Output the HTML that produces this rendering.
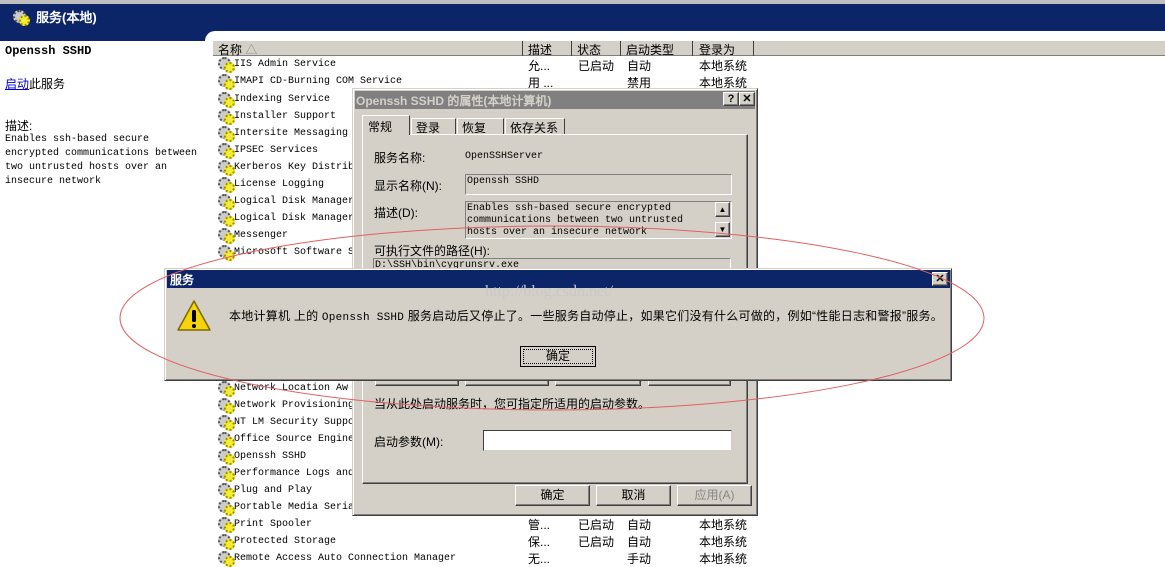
<!DOCTYPE html>
<html><head><meta charset="utf-8"><style>
*{margin:0;padding:0;box-sizing:border-box}
body{width:1165px;height:566px;overflow:hidden;background:#fff;position:relative;font-family:"Liberation Mono","WenQuanYi Zen Hei",monospace;font-size:10px;color:#000}
.a{position:absolute;white-space:nowrap}
.cn{font-family:"Liberation Sans","WenQuanYi Zen Hei",sans-serif;font-size:12px}
.row{position:absolute;left:217px;height:17px;line-height:17px;font-size:10px}
.ic{display:inline-block;width:16px;height:14px;vertical-align:middle;margin-right:1px;position:relative}
.ic:before{content:"";position:absolute;left:1px;top:1px;width:9px;height:9px;border-radius:50%;border:2px dotted #555;background:#ccc}
.ic:after{content:"";position:absolute;left:7px;top:6px;width:7px;height:7px;border-radius:50%;border:2px dotted #a80;background:#ee3}
.btn{position:absolute;background:#d4d0c8;border:1px solid;border-color:#fff #404040 #404040 #fff;box-shadow:inset -1px -1px #808080;text-align:center;font-family:"Liberation Sans","WenQuanYi Zen Hei",sans-serif;font-size:12px}
.fld{position:absolute;border:1px solid;border-color:#808080 #fff #fff #808080}
</style></head><body>
<div class="a" style="left:0;top:0;width:1165px;height:4px;background:#c0c0c0"></div>
<div class="a" style="left:0;top:4px;width:1165px;height:37px;background:#0c2468"></div>
<div class="a" style="left:205px;top:31px;width:960px;height:12px;background:#fff;border-top-left-radius:10px"></div>
<span class="ic a" style="left:12px;top:9px"></span>
<div class="a cn" style="left:36px;top:7px;color:#fff;font-weight:bold;font-size:13px">服务(本地)</div>
<div class="a" style="left:5px;top:44px;font-weight:bold;font-size:12px">Openssh SSHD</div>
<div class="a cn" style="left:5px;top:75px"><span style="color:#00c;text-decoration:underline">启动</span>此服务</div>
<div class="a cn" style="left:5px;top:117px">描述:</div>
<div class="a" style="left:5px;top:133px;line-height:14px;font-size:10px">Enables ssh-based secure<br>encrypted communications between<br>two untrusted hosts over an<br>insecure network</div>
<div class="a" style="left:213px;top:41px;width:952px;height:15px;background:#d4d0c8;border-bottom:1px solid #808080"></div>
<div class="a cn" style="left:218px;top:41px">名称 <span style="color:#888">△</span></div>
<div class="a" style="left:522px;top:41px;width:1px;height:15px;background:#404040"></div>
<div class="a cn" style="left:528px;top:41px">描述</div>
<div class="a" style="left:571px;top:41px;width:1px;height:15px;background:#404040"></div>
<div class="a cn" style="left:577px;top:41px">状态</div>
<div class="a" style="left:620px;top:41px;width:1px;height:15px;background:#404040"></div>
<div class="a cn" style="left:626px;top:41px">启动类型</div>
<div class="a" style="left:692px;top:41px;width:1px;height:15px;background:#404040"></div>
<div class="a cn" style="left:699px;top:41px">登录为</div>
<div class="a" style="left:753px;top:41px;width:1px;height:15px;background:#404040"></div>
<div class="row" style="top:56px"><span class="ic"></span>IIS Admin Service</div>
<div class="row" style="top:73px"><span class="ic"></span>IMAPI CD-Burning COM Service</div>
<div class="row" style="top:91px"><span class="ic"></span>Indexing Service</div>
<div class="row" style="top:108px"><span class="ic"></span>Installer Support</div>
<div class="row" style="top:125px"><span class="ic"></span>Intersite Messaging</div>
<div class="row" style="top:142px"><span class="ic"></span>IPSEC Services</div>
<div class="row" style="top:159px"><span class="ic"></span>Kerberos Key Distrib</div>
<div class="row" style="top:176px"><span class="ic"></span>License Logging</div>
<div class="row" style="top:193px"><span class="ic"></span>Logical Disk Manager</div>
<div class="row" style="top:210px"><span class="ic"></span>Logical Disk Manager</div>
<div class="row" style="top:227px"><span class="ic"></span>Messenger</div>
<div class="row" style="top:244px"><span class="ic"></span>Microsoft Software S</div>
<div class="row" style="top:380px"><span class="ic"></span>Network Location Aw</div>
<div class="row" style="top:397px"><span class="ic"></span>Network Provisioning</div>
<div class="row" style="top:414px"><span class="ic"></span>NT LM Security Suppo</div>
<div class="row" style="top:431px"><span class="ic"></span>Office Source Engine</div>
<div class="row" style="top:448px"><span class="ic"></span>Openssh SSHD</div>
<div class="row" style="top:465px"><span class="ic"></span>Performance Logs and</div>
<div class="row" style="top:482px"><span class="ic"></span>Plug and Play</div>
<div class="row" style="top:499px"><span class="ic"></span>Portable Media Seria</div>
<div class="row" style="top:516px"><span class="ic"></span>Print Spooler</div>
<div class="row" style="top:533px"><span class="ic"></span>Protected Storage</div>
<div class="row" style="top:550px"><span class="ic"></span>Remote Access Auto Connection Manager</div>
<div class="a cn" style="left:528px;top:57px">允...</div><div class="a cn" style="left:578px;top:57px">已启动</div><div class="a cn" style="left:627px;top:57px">自动</div><div class="a cn" style="left:699px;top:57px">本地系统</div>
<div class="a cn" style="left:528px;top:74px">用 ...</div><div class="a cn" style="left:627px;top:74px">禁用</div><div class="a cn" style="left:699px;top:74px">本地系统</div>
<div class="a cn" style="left:528px;top:516px">管...</div><div class="a cn" style="left:578px;top:516px">已启动</div><div class="a cn" style="left:627px;top:516px">自动</div><div class="a cn" style="left:699px;top:516px">本地系统</div>
<div class="a cn" style="left:528px;top:533px">保...</div><div class="a cn" style="left:578px;top:533px">已启动</div><div class="a cn" style="left:627px;top:533px">自动</div><div class="a cn" style="left:699px;top:533px">本地系统</div>
<div class="a cn" style="left:528px;top:550px">无...</div><div class="a cn" style="left:627px;top:550px">手动</div><div class="a cn" style="left:699px;top:550px">本地系统</div>
<div class="a" style="left:352px;top:88px;width:406px;height:428px;background:#d4d0c8;border:1px solid;border-color:#d4d0c8 #404040 #404040 #d4d0c8;box-shadow:inset 1px 1px #fff,inset -1px -1px #808080"></div>
<div class="a" style="left:355px;top:91px;width:400px;height:18px;background:#808080"></div>
<div class="a cn" style="left:356px;top:92px;color:#d4d0c8;font-weight:bold">Openssh SSHD 的属性(本地计算机)</div>
<div class="btn" style="left:723px;top:92px;width:16px;height:14px;font-size:11px;line-height:12px;font-weight:bold">?</div>
<div class="btn" style="left:739px;top:92px;width:16px;height:14px;font-size:11px;line-height:12px;font-weight:bold">✕</div>
<div class="a" style="left:362px;top:134px;width:386px;height:350px;border:1px solid;border-color:#fff #404040 #404040 #fff;box-shadow:inset -1px -1px #808080"></div>
<div class="a cn" style="left:362px;top:115px;width:48px;height:20px;background:#d4d0c8;border:1px solid #fff;border-bottom:none;border-right:1px solid #404040;padding:2px 5px">常规</div>
<div class="a cn" style="left:411px;top:118px;width:45px;height:16px;border:1px solid #fff;border-bottom:none;border-right:1px solid #404040;padding:0 4px">登录</div>
<div class="a cn" style="left:457px;top:118px;width:47px;height:16px;border:1px solid #fff;border-bottom:none;border-right:1px solid #404040;padding:0 4px">恢复</div>
<div class="a cn" style="left:505px;top:118px;width:60px;height:16px;border:1px solid #fff;border-bottom:none;border-right:1px solid #404040;padding:0 4px">依存关系</div>
<div class="a cn" style="left:374px;top:149px">服务名称:</div>
<div class="a" style="left:465px;top:151px">OpenSSHServer</div>
<div class="a cn" style="left:374px;top:177px">显示名称(N):</div>
<div class="fld" style="left:465px;top:174px;width:267px;height:21px;padding:1px"><span style="font-size:10px">Openssh SSHD</span></div>
<div class="a cn" style="left:374px;top:204px">描述(D):</div>
<div class="fld" style="left:465px;top:201px;width:267px;height:38px;line-height:12px;padding:1px;font-size:10px">Enables ssh-based secure encrypted<br>communications between two untrusted<br>hosts over an insecure network</div>
<div class="btn" style="left:715px;top:202px;width:15px;height:15px;font-size:8px;line-height:13px">▲</div>
<div class="btn" style="left:715px;top:222px;width:15px;height:15px;font-size:8px;line-height:13px">▼</div>
<div class="a cn" style="left:374px;top:242px">可执行文件的路径(H):</div>
<div class="fld" style="left:373px;top:258px;width:358px;height:12px;font-size:10px;line-height:14px;padding-left:1px">D:\SSH\bin\cygrunsrv.exe</div>
<div class="btn" style="left:375px;top:378px;width:84px;height:8px"></div>
<div class="btn" style="left:465px;top:378px;width:84px;height:8px"></div>
<div class="btn" style="left:555px;top:378px;width:86px;height:8px"></div>
<div class="btn" style="left:648px;top:378px;width:83px;height:8px"></div>
<div class="a cn" style="left:374px;top:395px">当从此处启动服务时，您可指定所适用的启动参数。</div>
<div class="a cn" style="left:374px;top:433px">启动参数(M):</div>
<div class="fld" style="left:483px;top:430px;width:249px;height:21px;background:#fff;border-color:#404040 #d4d0c8 #d4d0c8 #404040"></div>
<div class="btn" style="left:515px;top:485px;width:75px;height:21px;line-height:18px">确定</div>
<div class="btn" style="left:596px;top:485px;width:75px;height:21px;line-height:18px">取消</div>
<div class="btn" style="left:677px;top:485px;width:75px;height:21px;line-height:18px;color:#888">应用(A)</div>
<div class="a" style="left:164px;top:268px;width:788px;height:113px;background:#d4d0c8;border:1px solid;border-color:#d4d0c8 #404040 #404040 #d4d0c8;box-shadow:inset 1px 1px #fff,inset -1px -1px #808080"></div>
<div class="a" style="left:167px;top:270px;width:783px;height:18px;background:#0c2468"></div>
<div class="a cn" style="left:170px;top:271px;color:#fff;font-weight:bold">服务</div>
<div class="btn" style="left:932px;top:272px;width:16px;height:14px;font-size:11px;line-height:12px;font-weight:bold">✕</div>
<div class="a" style="left:485px;top:283px;font-size:16px;color:#c8c8c8;font-family:'Liberation Serif',serif">http://blog.csdn.net/</div>
<svg class="a" style="left:176px;top:299px" width="36" height="34"><polygon points="18,2 34,31 2,31" fill="#f5d40c" stroke="#7a6a00" stroke-width="1.5" stroke-linejoin="round"/><rect x="16" y="11" width="4" height="12" rx="1.5" fill="#000"/><circle cx="18" cy="27" r="2" fill="#000"/></svg>
<div class="a cn" style="left:229px;top:307px;letter-spacing:0.25px">本地计算机 上的 <span style="font-family:'Liberation Mono',monospace;font-size:11px">Openssh SSHD</span> 服务启动后又停止了。一些服务自动停止，如果它们没有什么可做的，例如“性能日志和警报”服务。</div>
<div class="a" style="left:520px;top:346px;width:76px;height:21px;border:1px solid #000;background:#d4d0c8"><div class="cn" style="margin:2px;height:15px;border:1px dotted #000;text-align:center;line-height:13px">确定</div></div>
<svg class="a" style="left:0;top:0" width="1165" height="566"><ellipse cx="552" cy="318" rx="432" ry="92" fill="none" stroke="#e06060" stroke-width="1"/></svg>
</body></html>
